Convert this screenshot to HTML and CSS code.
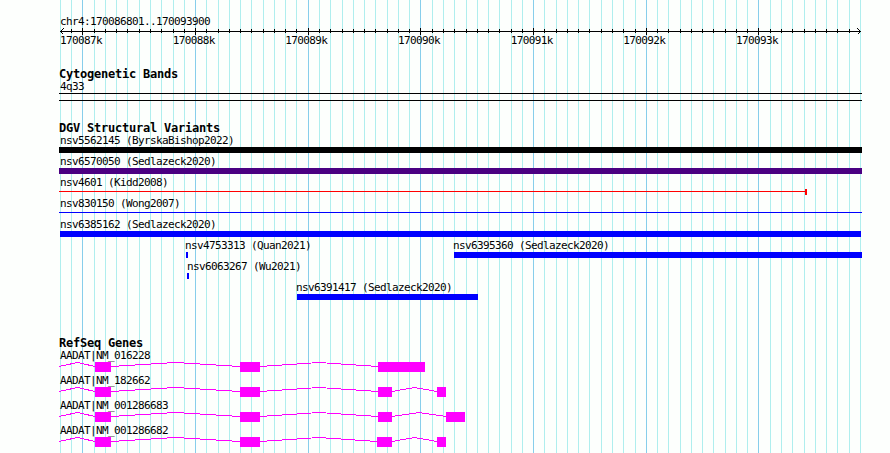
FILE: index.html
```html
<!DOCTYPE html>
<html lang="en">
<head>
  <meta charset="UTF-8">
  <title>chr4:170086801..170093900</title>
  <link rel="stylesheet" href="styles.css">
</head>
<body>
  <svg class="grid" width="890" height="453">
    <path id="grid-minor" class="minor"/>
    <path id="grid-major" class="major"/>
  </svg>

  <main class="browser">
    <header class="ruler">
      <div class="label">chr4:170086801..170093900</div>
      <svg class="axis" width="803" height="9">
        <path d="M1 4.5H802M4.5 1.5L1.5 4.5L4.5 7.5M798.5 1.5L801.5 4.5L798.5 7.5"/>
        <path id="ticks"/>
      </svg>
      <div class="positions">
        <span>170087k</span>
        <span>170088k</span>
        <span>170089k</span>
        <span>170090k</span>
        <span>170091k</span>
        <span>170092k</span>
        <span>170093k</span>
      </div>
    </header>

    <section class="track bands">
      <h2>Cytogenetic Bands</h2>
      <div class="label">4q33</div>
      <div class="band"></div>
    </section>

    <section class="track variants">
      <h2>DGV Structural Variants</h2>
      <div class="row"><div class="variant"><div class="label">nsv5562145 (ByrskaBishop2022)</div><div class="bar black"></div></div></div>
      <div class="row"><div class="variant"><div class="label">nsv6570050 (Sedlazeck2020)</div><div class="bar indigo"></div></div></div>
      <div class="row"><div class="variant kidd"><div class="label">nsv4601 (Kidd2008)</div><div class="bar red"></div></div></div>
      <div class="row"><div class="variant"><div class="label">nsv830150 (Wong2007)</div><div class="bar line"></div></div></div>
      <div class="row"><div class="variant"><div class="label">nsv6385162 (Sedlazeck2020)</div><div class="bar inset"></div></div></div>
      <div class="row">
        <div class="variant quan"><div class="label">nsv4753313 (Quan2021)</div><div class="bar"></div></div>
        <div class="variant right"><div class="label">nsv6395360 (Sedlazeck2020)</div><div class="bar"></div></div>
      </div>
      <div class="row"><div class="variant wu"><div class="label">nsv6063267 (Wu2021)</div><div class="bar"></div></div></div>
      <div class="row"><div class="variant middle"><div class="label">nsv6391417 (Sedlazeck2020)</div><div class="bar"></div></div></div>
    </section>

    <section class="track genes">
      <h2>RefSeq Genes</h2>
      <div class="gene">
        <div class="label">AADAT|NM_016228</div>
        <svg width="803" height="10">
          <path class="intron" d="M0 4.5L18.5 .5L36 4.5M52 4.5L116.5 .5L181 4.5M201 4.5L260 .5L319 4.5"/>
          <path class="exon" d="M36 0h16v10h-16zM181 0h20v10h-20zM319 0h47v10h-47z"/>
        </svg>
      </div>
      <div class="gene">
        <div class="label">AADAT|NM_182662</div>
        <svg width="803" height="10">
          <path class="intron" d="M0 4.5L18.5 .5L36 4.5M52 4.5L116.5 .5L181 4.5M201 4.5L260 .5L319 4.5M333 4.5L355.5 .5L378 4.5"/>
          <path class="exon" d="M36 0h16v10h-16zM181 0h20v10h-20zM319 0h14v10h-14zM378 0h9v10h-9z"/>
        </svg>
      </div>
      <div class="gene">
        <div class="label">AADAT|NM_001286683</div>
        <svg width="803" height="10">
          <path class="intron" d="M0 4.5L18.5 .5L36 4.5M52 4.5L116.5 .5L181 4.5M201 4.5L260 .5L319 4.5M333 4.5L360 .5L387 4.5"/>
          <path class="exon" d="M36 0h16v10h-16zM181 0h20v10h-20zM319 0h14v10h-14zM387 0h19v10h-19z"/>
        </svg>
      </div>
      <div class="gene">
        <div class="label">AADAT|NM_001286682</div>
        <svg width="803" height="10">
          <path class="intron" d="M0 4.5L18.5 .5L36 4.5M52 4.5L116.5 .5L181 4.5M201 4.5L260 .5L318 4.5M333 4.5L355.5 .5L378 4.5"/>
          <path class="exon" d="M36 0h16v10h-16zM181 0h20v10h-20zM318 0h15v10h-15zM378 0h9v10h-9z"/>
        </svg>
      </div>
    </section>
  </main>

  <script>
    // one line every 100 bp, a darker one every 1000 bp
    let minor = '', major = '', ticks = '';
    for (let i = 0; i < 72; i++) {
      const x = Math.round(59.86 + i * 11.268) + 0.5;
      const isMajor = i % 10 === 2;
      if (isMajor) {
        major += `M${x} 0V453`;
      } else {
        minor += `M${x} 0V453`;
      }
      if (i > 0 && i < 71) {
        ticks += isMajor ? `M${x - 59} 1V8` : `M${x - 59} 2V6`;
      }
    }
    document.getElementById('grid-minor').setAttribute('d', minor);
    document.getElementById('grid-major').setAttribute('d', major);
    document.getElementById('ticks').setAttribute('d', ticks);
  </script>
</body>
</html>
```
FILE: styles.css
```css
body {
  margin: 0;
  height: 453px;
  overflow: hidden;
  background: #fdfffd;
  color: #000;
  font-family: "DejaVu Sans Mono", monospace;
}
svg {
  display: block;
  fill: none;
  shape-rendering: crispEdges;
}
.grid {
  position: absolute;
  top: 0;
  left: 0;
  z-index: -1;
}
.minor {
  stroke: #afeeee;
}
.major {
  stroke: #87ceeb;
}
.browser {
  width: 803px;
  padding: 15px 0 0 59px;
}
.label, .positions {
  height: 12px;
  font-size: 11px;
  line-height: 14px;
  letter-spacing: -0.622px;
  white-space: pre;
}
.label {
  padding-left: 1px;
}
h2 {
  margin: 0;
  height: 12px;
  font-size: 12px;
  line-height: 12px;
  letter-spacing: -0.225px;
}
.axis {
  stroke: #000;
}
.positions {
  display: flex;
  margin-top: -2px;
  padding-left: 1px;
}
.positions span {
  flex: 0 0 112.68px;
}
.bands {
  margin-top: 22px;
}
.band {
  height: 6px;
  margin-top: 1px;
  border: solid #000;
  border-width: 1px 0;
}
.variants {
  margin-top: 21px;
}
.row {
  display: flex;
  height: 21px;
}
.variant {
  width: 803px;
  flex: none;
}
.bar {
  height: 6px;
  margin-top: 1px;
  background: #00f;
}
.black {
  background: #000;
}
.indigo {
  background: #4b0082;
}
.line {
  height: 1px;
  margin-top: 3px;
}
.inset {
  margin-left: 1px;
  margin-right: 1px;
}
.kidd {
  width: 748px;
}
/* thin line that ends in a small block */
.red {
  background: linear-gradient(#f00, #f00) right / 2px 6px no-repeat,
    linear-gradient(#f00, #f00) 0 2px / 100% 1px no-repeat;
}
.quan, .wu {
  width: 2px;
}
.quan {
  margin-left: 127px;
}
.quan .label, .right .label, .middle .label {
  padding-left: 0;
  margin-left: -1px;
}
.wu .label {
  padding-left: 0;
}
.wu {
  margin-left: 128px;
}
.right {
  width: 408px;
  margin-left: 266px;
}
.middle {
  width: 181px;
  margin-left: 238px;
}
.genes {
  margin-top: 35px;
}
.gene {
  height: 25px;
}
.gene svg {
  margin-top: 1px;
}
.intron {
  stroke: #f0f;
}
.exon {
  fill: #f0f;
}
```
